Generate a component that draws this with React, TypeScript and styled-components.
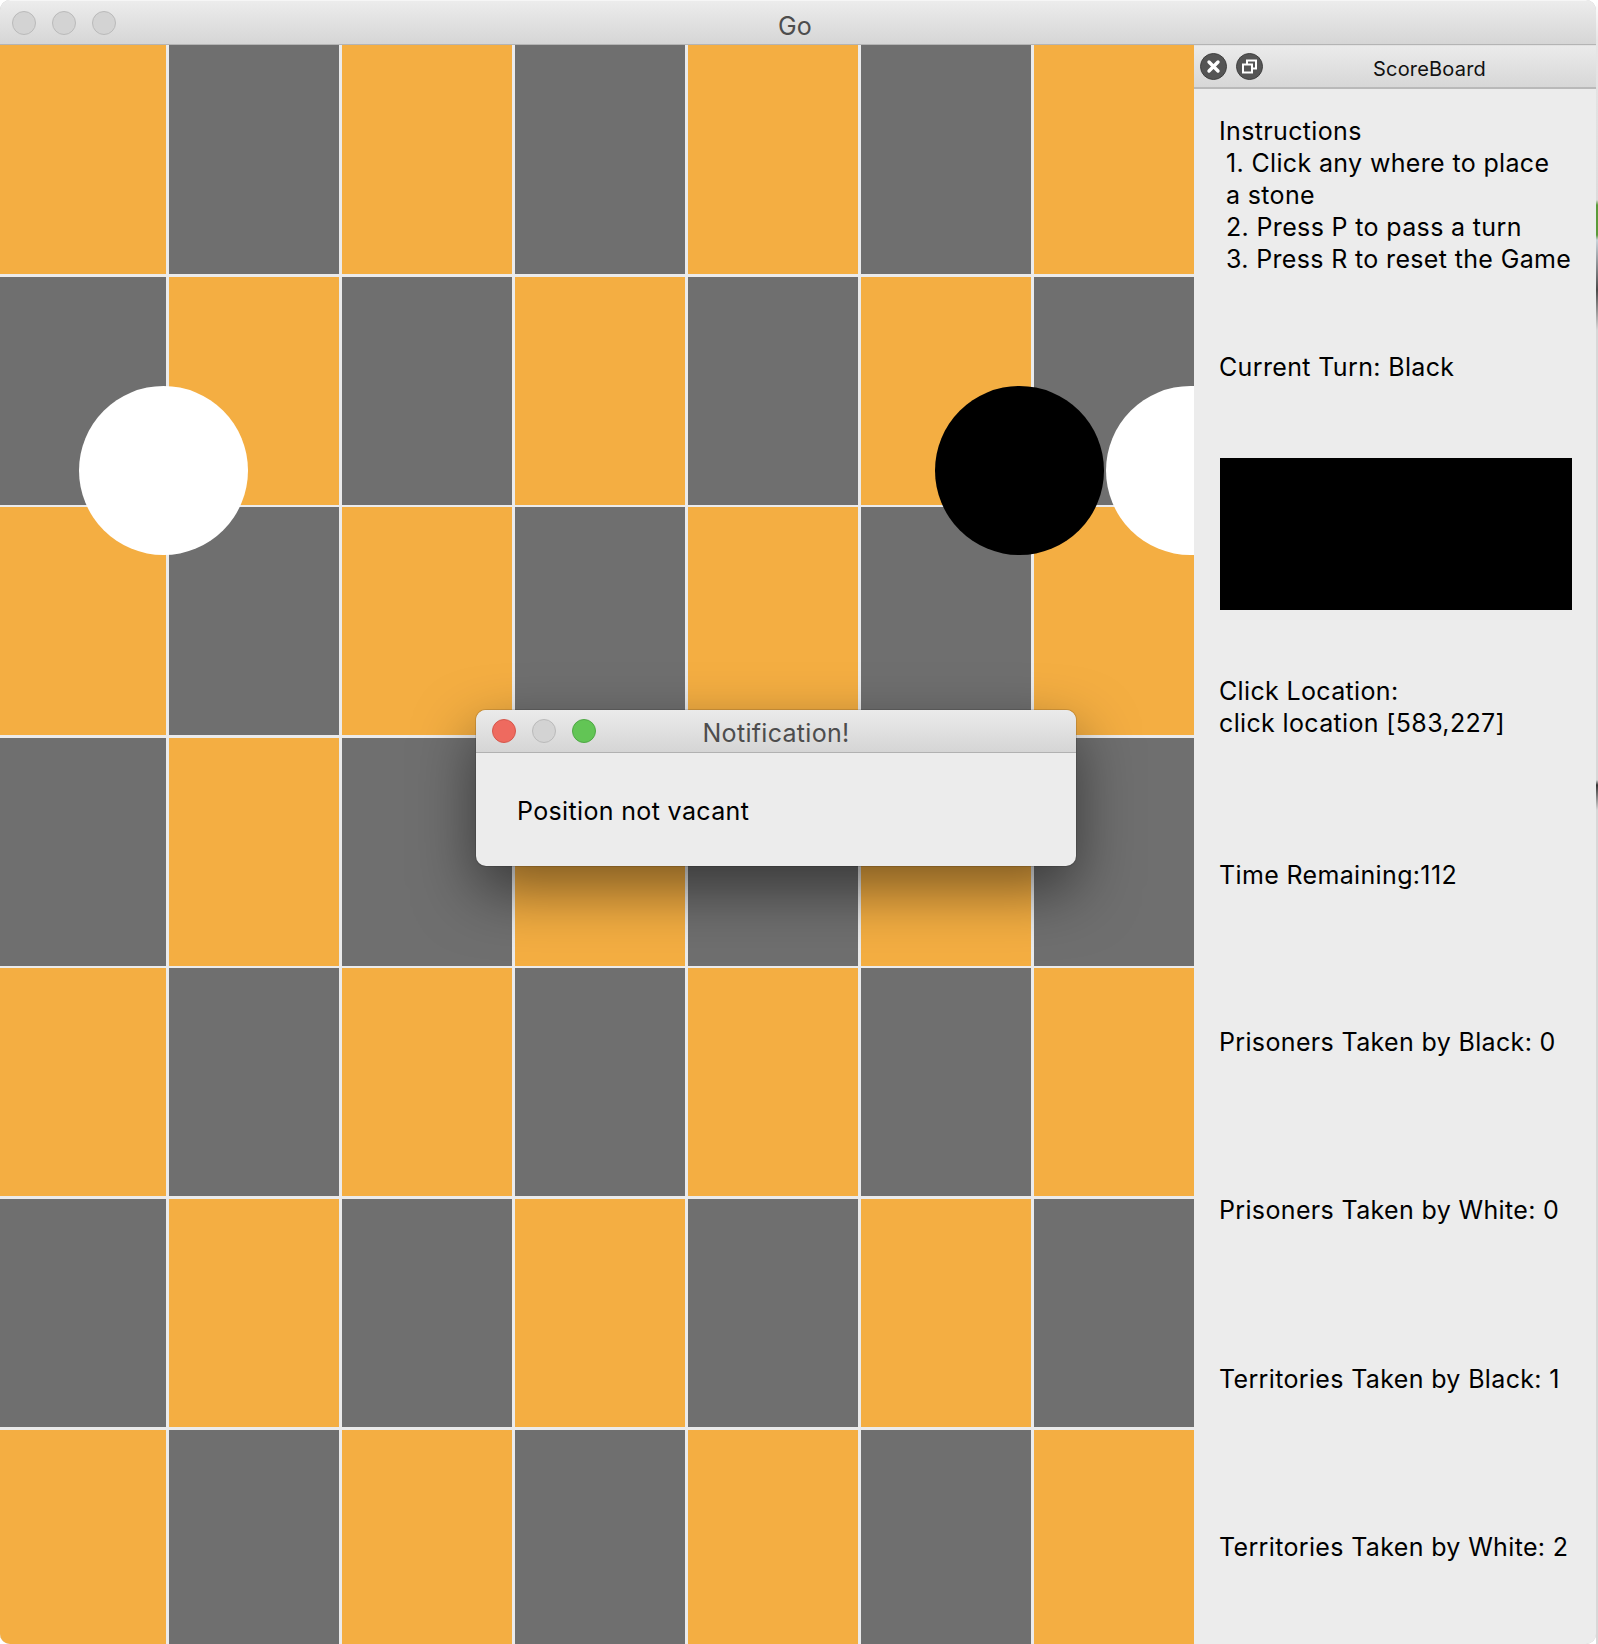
import React from "react";
import styled, { createGlobalStyle } from "styled-components";

const GlobalStyle = createGlobalStyle`
  html, body { margin: 0; padding: 0; background: #ffffff; }
  body { overflow: hidden; font-family: Inter, "Noto Sans", "Liberation Sans", sans-serif; }
  * { box-sizing: border-box; }
`;

const Desktop = styled.div`
  display: flex;
  width: 1598px;
  height: 1644px;
  background: #ffffff;
`;

const DesktopEdge = styled.div`
  width: 2px;
  height: 100%;
  background: linear-gradient(
    to bottom,
    #ffffff 0px,
    #e6e6e6 40px,
    #dcdcdc 200px,
    #5a9a3a 205px,
    #5a9a3a 235px,
    #c9d3da 240px,
    #4a4a4a 290px,
    #d8d8d8 330px,
    #d8d8d8 780px,
    #333 785px,
    #d8d8d8 810px,
    #d8d8d8 1644px
  );
`;

const Window = styled.div`
  position: relative;
  width: 1596px;
  height: 1644px;
  border-radius: 10px;
  overflow: hidden;
  display: flex;
  flex-direction: column;
  background: #ececec;
  box-shadow: inset 0 0 0 1px #c8c8c8;
`;

const TitleBar = styled.div`
  flex: 0 0 45px;
  display: grid;
  grid-template-columns: 1fr auto 1fr;
  align-items: center;
  padding: 0 12px;
  background: linear-gradient(to bottom, #ececec, #d6d6d6);
  border-top: 1px solid #f6f6f6;
  border-bottom: 1px solid #b4b4b4;
`;

const Lights = styled.div`
  display: flex;
  gap: 16px;
  align-items: center;
`;

const Light = styled.span<{ $color: string; $border: string }>`
  width: 24px;
  height: 24px;
  border-radius: 50%;
  background: ${(p) => p.$color};
  border: 1px solid ${(p) => p.$border};
`;

const WindowTitle = styled.div<{ $shift?: number; $drop?: number }>`
  font-size: 25px;
  color: #4d4d4d;
  line-height: 1;
  letter-spacing: 0.3px;
  padding-top: ${(p) => p.$drop ?? 4}px;
  margin-right: ${(p) => p.$shift ?? 0}px;
`;

const Content = styled.div`
  flex: 1;
  min-height: 0;
  display: flex;
`;

const Board = styled.div`
  position: relative;
  width: 1194px;
  flex: 0 0 1194px;
  overflow: hidden;
  background: #ebebeb;
  display: grid;
  grid-template-columns: 166px repeat(7, 170px);
  grid-template-rows: 229px repeat(6, 228px);
  column-gap: 3px;
  row-gap: 2.6px;
`;

const Cell = styled.div<{ $dark: boolean }>`
  background: ${(p) => (p.$dark ? "#6f6f6f" : "#f4ae42")};
`;

const Stone = styled.div<{ $black: boolean }>`
  position: absolute;
  top: 341px;
  width: 169px;
  height: 169px;
  border-radius: 50%;
  background: ${(p) => (p.$black ? "#000000" : "#ffffff")};
`;

const Sidebar = styled.div`
  flex: 1;
  display: flex;
  flex-direction: column;
  background: #ececec;
  color: #000;
`;

const DockBar = styled.div`
  flex: 0 0 44px;
  display: flex;
  align-items: center;
  padding-left: 6px;
  background: linear-gradient(to bottom, #ebebeb, #d7d7d7);
  border-top: 1px solid #e2e2e2;
  border-bottom: 2px solid #b9b9b9;
`;

const DockButtons = styled.div`
  display: flex;
  gap: 9px;
  align-items: center;
`;

const DockTitle = styled.div`
  flex: 1;
  text-align: center;
  font-size: 20px;
  letter-spacing: 0.2px;
  color: #111;
  padding-top: 4px;
`;

const Panel = styled.div`
  display: flex;
  flex-direction: column;
  padding: 26px 0 0 25px;
  font-size: 25px;
  line-height: 32px;
  letter-spacing: 0.35px;
`;

const Block = styled.div<{ $gap: number }>`
  margin-top: ${(p) => p.$gap}px;
  white-space: nowrap;
`;

const Line = styled.div<{ $indent?: boolean }>`
  padding-left: ${(p) => (p.$indent ? "7px" : "0")};
`;

const TurnSwatch = styled.div<{ $gap: number }>`
  margin-top: ${(p) => p.$gap}px;
  margin-left: 1px;
  width: 352px;
  height: 152px;
  background: #000;
`;

const Dialog = styled.div`
  position: absolute;
  left: 476px;
  top: 710px;
  width: 600px;
  height: 156px;
  border-radius: 10px;
  overflow: hidden;
  background: #ececec;
  display: flex;
  flex-direction: column;
  box-shadow: 0 24px 60px rgba(0, 0, 0, 0.5), 0 0 0 1px rgba(0, 0, 0, 0.12);
`;

const DialogBar = styled.div`
  flex: 0 0 43px;
  display: grid;
  grid-template-columns: 1fr auto 1fr;
  align-items: center;
  padding: 0 16px;
  background: linear-gradient(to bottom, #ebebeb, #d5d5d5);
  border-bottom: 1px solid #b1b1b1;
`;

const DialogBody = styled.div`
  flex: 1;
  padding: 42px 0 0 41px;
  font-size: 25px;
  line-height: 32px;
  letter-spacing: 0.35px;
  color: #000;
`;

const CloseIcon = () => (
  <svg width="27" height="27" viewBox="0 0 27 27">
    <circle cx="13.5" cy="13.5" r="13" fill="#555555" stroke="#3f3f3f" />
    <path d="M9 9 L18 18 M18 9 L9 18" stroke="#ffffff" strokeWidth="3.4" strokeLinecap="round" />
  </svg>
);

const FloatIcon = () => (
  <svg width="27" height="27" viewBox="0 0 27 27">
    <circle cx="13.5" cy="13.5" r="13" fill="#555555" stroke="#3f3f3f" />
    <rect x="11" y="7.5" width="9" height="8" fill="none" stroke="#ffffff" strokeWidth="2" />
    <rect x="7" y="11.5" width="9" height="8" fill="#555555" stroke="#ffffff" strokeWidth="2" />
  </svg>
);

const ROWS = 7;
const COLS = 8;

const stones = [
  { left: 79, black: false },
  { left: 935, black: true },
  { left: 1106, black: false },
];

export default function App() {
  const cells: React.ReactNode[] = [];
  for (let r = 0; r < ROWS; r++) {
    for (let c = 0; c < COLS; c++) {
      cells.push(<Cell key={`${r}-${c}`} $dark={(r + c) % 2 === 1} />);
    }
  }

  return (
    <>
      <GlobalStyle />
      <Desktop>
        <Window>
          <TitleBar>
            <Lights>
              <Light $color="#d3d3d3" $border="#bababa" />
              <Light $color="#d3d3d3" $border="#bababa" />
              <Light $color="#d3d3d3" $border="#bababa" />
            </Lights>
            <WindowTitle $shift={6} $drop={7}>Go</WindowTitle>
            <span />
          </TitleBar>
          <Content>
            <Board>
              {cells}
              {stones.map((s, i) => (
                <Stone key={i} $black={s.black} style={{ left: s.left }} />
              ))}
            </Board>
            <Sidebar>
              <DockBar>
                <DockButtons>
                  <CloseIcon />
                  <FloatIcon />
                </DockButtons>
                <DockTitle>ScoreBoard</DockTitle>
              </DockBar>
              <Panel>
                <Block $gap={0}>
                  <Line>Instructions</Line>
                  <Line $indent>1. Click any where to place</Line>
                  <Line $indent>a stone</Line>
                  <Line $indent>2. Press P to pass a turn</Line>
                  <Line $indent>3. Press R to reset the Game</Line>
                </Block>
                <Block $gap={76}>Current Turn: Black</Block>
                <TurnSwatch $gap={75} />
                <Block $gap={65}>
                  <Line>Click Location:</Line>
                  <Line>click location [583,227]</Line>
                </Block>
                <Block $gap={120}>Time Remaining:112</Block>
                <Block $gap={135}>Prisoners Taken by Black: 0</Block>
                <Block $gap={136}>Prisoners Taken by White: 0</Block>
                <Block $gap={137}>Territories Taken by Black: 1</Block>
                <Block $gap={136}>Territories Taken by White: 2</Block>
              </Panel>
            </Sidebar>
          </Content>
          <Dialog>
            <DialogBar>
              <Lights>
                <Light $color="#ee6a5f" $border="#d5574c" />
                <Light $color="#d3d3d3" $border="#bababa" />
                <Light $color="#62c555" $border="#4fa845" />
              </Lights>
              <WindowTitle>Notification!</WindowTitle>
              <span />
            </DialogBar>
            <DialogBody>Position not vacant</DialogBody>
          </Dialog>
        </Window>
        <DesktopEdge />
      </Desktop>
    </>
  );
}
